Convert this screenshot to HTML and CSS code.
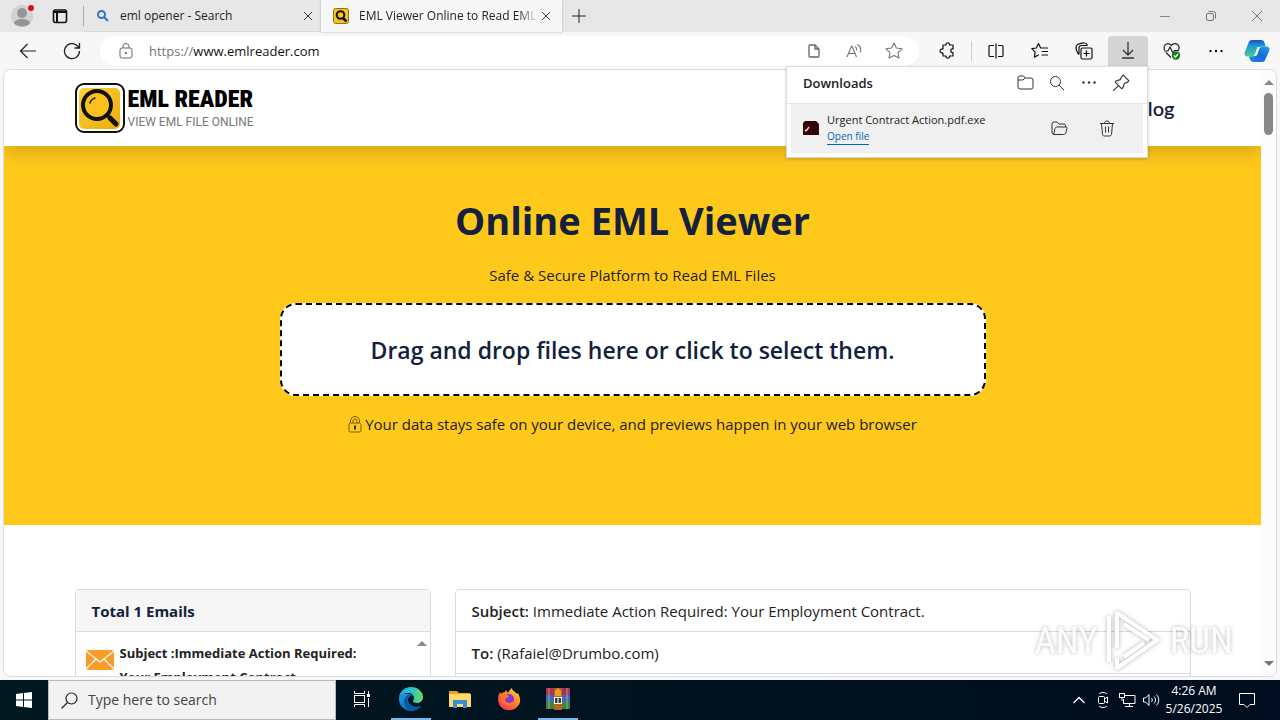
FILE: index.html
```html
<!DOCTYPE html>
<html lang="en">
<head>
<meta charset="utf-8">
<title>EML Viewer Online to Read EML Files</title>
<link rel="stylesheet" href="styles.css">
</head>
<body>
<div class="desktop">
  <div class="tabstrip">
    <button class="plain profile" aria-label="Profile"><svg width="26" height="26" viewBox="0 0 26 26"><circle cx="12" cy="13" r="11" fill="#d4d2d0"/><circle cx="12" cy="10" r="5" fill="#979593"/><path d="M4 20.500c0-6 16-6 16 0-4 4-12 4-16 0z" fill="#979593"/><circle cx="21" cy="5" r="3" fill="#e00b1c"/></svg></button>
    <button class="plain workspaces" aria-label="Tab actions"><svg width="16" height="16" viewBox="0 0 16 16" fill="none" stroke="#111" stroke-width="1.6"><rect x="1.5" y="2" width="13" height="12.500" rx="2"/><path d="M1.500 4h13M5 4v10" stroke-width="2"/></svg></button>
    <span class="strip-line"></span>
    <div class="tab">
      <svg width="14" height="14" viewBox="0 0 14 14" fill="none" stroke="#2f78bd" stroke-width="2"><circle cx="5.500" cy="5.500" r="3.500"/><path d="M8 8l4 4"/></svg>
      <span class="tab-title">eml opener - Search</span>
      <button class="plain close" aria-label="Close tab"><svg width="10" height="10" viewBox="0 0 10 10" stroke="#333"><path d="M1 1l8 8M9 1l-8 8"/></svg></button>
    </div>
    <div class="tab active">
      <svg width="16" height="16" viewBox="0 0 16 16"><rect x=".5" y=".5" width="15" height="15" rx="2" fill="#fbc21b" stroke="#8d712d"/><circle cx="7.500" cy="7" r="3.800" fill="none" stroke="#111" stroke-width="2"/><path d="M10 10l3.500 3.500" stroke="#111" stroke-width="2.500"/></svg>
      <span class="tab-title fade">EML Viewer Online to Read EML Files</span>
      <button class="plain close" aria-label="Close tab"><svg width="10" height="10" viewBox="0 0 10 10" stroke="#333"><path d="M1 1l8 8M9 1l-8 8"/></svg></button>
    </div>
    <button class="plain newtab" aria-label="New tab"><svg width="14" height="14" viewBox="0 0 14 14" stroke="#222"><path d="M7 0v14M0 7h14"/></svg></button>
    <div class="window-buttons">
      <button class="plain" aria-label="Minimize"><svg width="12" height="12" viewBox="0 0 12 12" stroke="#888"><path d="M1 6.500h10"/></svg></button>
      <button class="plain" aria-label="Restore"><svg width="12" height="12" viewBox="0 0 12 12" fill="none" stroke="#777"><rect x="1.500" y="3.500" width="7" height="7" rx="1.500"/><path d="M3.500 1.500h5a2 2 0 0 1 2 2v5"/></svg></button>
      <button class="plain" aria-label="Close"><svg width="12" height="12" viewBox="0 0 12 12" stroke="#777"><path d="M1 1l10 10M11 1L1 11"/></svg></button>
    </div>
  </div>

  <div class="toolbar">
    <button class="plain tool" aria-label="Back"><svg width="18" height="16" viewBox="0 0 18 16" fill="none" stroke="#222" stroke-width="1.200"><path d="M17 8H2M8.500 1L1.500 8l7 7"/></svg></button>
    <button class="plain tool" aria-label="Refresh"><svg width="18" height="18" viewBox="0 0 18 18" fill="none" stroke="#222" stroke-width="1.300"><path d="M16.500 9A7.500 7.500 0 1 1 14 3.500l2 2M16.500 1v5h-5"/></svg></button>
    <div class="address">
      <svg class="site-lock" width="14" height="16" viewBox="0 0 14 16" fill="none" stroke="#666"><rect x="1" y="5" width="12" height="10" rx="2"/><path d="M4 5V3.500a3 3 0 0 1 6 0V5"/><circle cx="7" cy="10" r=".7" fill="#666"/></svg>
      <div class="url" role="textbox" aria-label="Address"><span class="scheme">https://</span>www.emlreader.com</div>
      <button class="plain tool" aria-label="Page"><svg width="12" height="14" viewBox="0 0 12 14" fill="none" stroke="#666" stroke-width="1.300"><path d="M1 2a1 1 0 0 1 1-1h5l4 4v7a1 1 0 0 1-1 1H2a1 1 0 0 1-1-1zM7 1v4h4"/></svg></button>
      <button class="plain tool" aria-label="Read aloud"><svg width="16" height="16" viewBox="0 0 16 16" fill="none" stroke="#777" stroke-width="1.100"><path d="M1 14L5.500 3h.5l4.500 11M2.500 10.500H9M9 3.500c1.500 1 2 2.500 1.500 4M11.500 1.500c3 2 4 4.500 2.500 8"/></svg></button>
      <button class="plain tool" aria-label="Favorite"><svg width="18" height="17" viewBox="0 0 18 17" fill="none" stroke="#777" stroke-width="1.100" stroke-linejoin="round"><path d="M9 1l2.400 5 5.600.8-4 3.900 1 5.300-5-2.600L4 16l1-5.300-4-3.900L6.600 6z"/></svg></button>
    </div>
    <button class="plain tool" aria-label="Extensions"><svg width="16" height="17" viewBox="0 0 16 17" fill="none" stroke="#111" stroke-width="1.200" stroke-linejoin="round"><path d="M4 3h3c-.5-3 4-3 3.500 0H14v4c-3-.8-3 4 0 3.500V14h-3.500c.5 3-4 3-3.500 0H4v-3C0 11.500 0 6.500 4 7z"/></svg></button>
    <span class="tool-line"></span>
    <button class="plain tool" aria-label="Split screen"><svg width="16" height="16" viewBox="0 0 16 16" fill="none" stroke="#111" stroke-width="1.200"><path d="M6 2.500H2a1 1 0 0 0-1 1v9a1 1 0 0 0 1 1h4M10 2.500h4a1 1 0 0 1 1 1v9a1 1 0 0 1-1 1h-4M8 .5v15"/></svg></button>
    <button class="plain tool" aria-label="Favorites"><svg width="18" height="17" viewBox="0 0 18 17" fill="none" stroke="#111" stroke-width="1.200" stroke-linejoin="round"><path d="M11 6L9.600 6 7.500 1.500 5.400 6 .8 6.700l3.400 3.500-.8 5 4.400-2.500M11 6h6M10.500 9.500H17M10.500 13H17"/></svg></button>
    <button class="plain tool" aria-label="Collections"><svg width="18" height="18" viewBox="0 0 18 18" fill="none" stroke="#111" stroke-width="1.200"><rect x="6" y="6" width="11" height="11" rx="1.500"/><path d="M11.500 8.500v6M8.500 11.500h6M4 12.500C1.500 10.500.5 6 1.500 3.500 2.500 2 7 .8 9.500 1c2 0 2.500 1 3 2.500M4 12.500V6c0-1.500 1-2.500 2.500-2.500h6"/></svg></button>
    <div class="downloads">
      <button class="plain tool pressed" aria-label="Downloads"><svg width="14" height="17" viewBox="0 0 14 17" fill="none" stroke="#333" stroke-width="1.300"><path d="M7 0v13M2 8l5 5 5-5M1 16h12"/></svg></button>
      <section class="popup">
        <header class="popup-head">
          <h2>Downloads</h2>
          <button class="plain pop-btn" aria-label="Open downloads folder"><svg width="17" height="15" viewBox="0 0 17 15" fill="none" stroke="#333"><path d="M1 3a2 2 0 0 1 2-2h3.500l2 2H14a2 2 0 0 1 2 2v7a2 2 0 0 1-2 2H3a2 2 0 0 1-2-2zM1 5h5l2-2"/></svg></button>
          <button class="plain pop-btn" aria-label="Search downloads"><svg width="16" height="16" viewBox="0 0 16 16" fill="none" stroke="#333"><circle cx="6.500" cy="6.500" r="5"/><path d="M10 10l5 5"/></svg></button>
          <button class="plain pop-btn" aria-label="More options"><svg width="14" height="4" viewBox="0 0 14 4" fill="#333"><circle cx="1.500" cy="1.500" r="1.200"/><circle cx="7" cy="1.500" r="1.200"/><circle cx="12.500" cy="1.500" r="1.200"/></svg></button>
          <button class="plain pop-btn" aria-label="Pin"><svg width="18" height="18" viewBox="0 0 16 16" fill="none" stroke="#333" stroke-linejoin="round"><path d="M10 1l5 5-.8 1-3.200 1.500-1.500 4-1 .5L2.800 7.300l.6-1L7.300 5 9 1.800zM5.500 10.500L1 15"/></svg></button>
        </header>
        <div class="download-item">
          <svg width="16" height="14" viewBox="0 0 16 14"><path d="M2 0h11l3 3v11H0V2z" fill="#310509"/><path d="M2 10c3-1 3-3 4-4" fill="none" stroke="#f7cfd1" stroke-width="1.500"/></svg>
          <div class="file">
            <span class="file-name">Urgent Contract Action.pdf.exe</span>
            <a href="#" class="open-file">Open file</a>
          </div>
          <button class="plain item-btn" aria-label="Show in folder"><svg width="17" height="15" viewBox="0 0 17 15" fill="none" stroke="#333" stroke-linejoin="round"><path d="M2.500 13.500L1 12V3a2 2 0 0 1 2-2h3l2 2h5a1.500 1.500 0 0 1 1.500 1.500V6M2.500 13.500L4 7.500c.3-1 1-1.500 2-1.500h9c1 0 1.200.5 1 1.500l-1.300 4.500c-.3 1-1 1.500-2 1.500z"/></svg></button>
          <button class="plain item-btn" aria-label="Delete file"><svg width="16" height="17" viewBox="0 0 16 17" fill="none" stroke="#333"><path d="M1 3.500h14M5.500 3.500c0-3.500 5-3.500 5 0M2.500 3.500l1 11a2 2 0 0 0 2 1.500h5a2 2 0 0 0 2-1.500l1-11M6.500 6.500v6M9.500 6.500v6"/></svg></button>
        </div>
      </section>
    </div>
    <button class="plain tool" aria-label="Browser essentials"><svg width="18" height="18" viewBox="0 0 18 18" fill="none" stroke="#222" stroke-width="1.200"><path d="M1.500 8C0 4 3 1 6 1.800 7.500 2 8 3 8.500 3.500 10 1 14 1 15.500 3.500c.8 1.500.8 3 0 4.500M3 10.500l5 5M1 9h4l2-4 3 6 1.500-2.500H16"/><circle cx="13" cy="13.500" r="4.200" fill="#16811c" stroke="none"/><path d="M11 13.500l1.500 1.500 2.500-3" stroke="#fff"/></svg></button>
    <button class="plain tool" aria-label="Settings and more"><svg width="14" height="4" viewBox="0 0 14 4" fill="#111"><circle cx="1.500" cy="2" r="1.200"/><circle cx="7" cy="2" r="1.200"/><circle cx="12.500" cy="2" r="1.200"/></svg></button>
    <button class="plain copilot" aria-label="Copilot"><svg width="26" height="24" viewBox="0 0 26 24"><defs><linearGradient id="cpa" x2="0" y2="1"><stop stop-color="#1c4fc0"/><stop offset=".35" stop-color="#1c9ad6"/><stop offset="1" stop-color="#4ccb86"/></linearGradient><linearGradient id="cpb" x1="0" y1="1" x2="1" y2="0"><stop stop-color="#1a8de8"/><stop offset=".5" stop-color="#1668d8"/><stop offset="1" stop-color="#26a4ee"/></linearGradient></defs><path d="M8 1h9c2 0 3 1 3.600 3l1 3.500h-3.600c-2 0-3.200.8-3.800 2.800L12 15c-.6 2-1.700 2.500-3.700 2.500H4c-3 0-4-2-3.200-4.500L4.500 4C5.200 2 6 1 8 1z" fill="url(#cpa)"/><path d="M18 23H9.500c-2 0-3-1-3.600-3L5 17.500h3c2 0 3.300-.8 4-2.800l1.600-4.700c.6-1.700 1.700-2.500 3.700-2.500H22c3 0 4 2 3.200 4.500L21.500 20c-.7 2-1.500 3-3.500 3z" fill="url(#cpb)"/><path d="M13.500 8h4c-1.300.3-1.800 1-2.200 2l-1.800 5c-.4 1.300-1 2-2.200 2H9c1-.4 1.500-1 1.900-2z" fill="#f4fcff"/></svg></button>
  </div>

  <div class="viewport">
    <main class="page">
      <header class="site-head">
        <div class="container head-row">
          <a class="brand" href="#" aria-label="EML Reader">
            <svg width="50" height="50" viewBox="0 0 50 50"><defs><linearGradient id="lg" x2="1" y2="1"><stop stop-color="#ffd23a"/><stop offset="1" stop-color="#eda90b"/></linearGradient></defs><rect x="1" y="1" width="48" height="48" rx="8" fill="#fff" stroke="#111" stroke-width="2"/><rect x="4" y="5" width="41" height="41" rx="5" fill="url(#lg)"/><circle cx="22" cy="22" r="14" fill="#fbc01b" stroke="#111" stroke-width="4"/><path d="M31 31l3 3" stroke="#111" stroke-width="3"/><path d="M35 35l6 6" stroke="#111" stroke-width="5" stroke-linecap="round"/><path d="M15 20c.5-2 2-4 5-5" stroke="#222" stroke-width="1.500" fill="none" stroke-linecap="round"/></svg>
            <span class="brand-text"><strong>EML READER</strong><small>VIEW EML FILE ONLINE</small></span>
          </a>
          <nav><a class="nav-link" href="#">Blog</a></nav>
        </div>
      </header>
      <section class="hero">
        <h1>Online EML Viewer</h1>
        <p class="lead">Safe &amp; Secure Platform to Read EML Files</p>
        <button class="dropzone">Drag and drop files here or click to select them.</button>
        <p class="safe"><svg width="14" height="17" viewBox="0 0 14 17" fill="none" stroke="#7a5c12"><rect x="1" y="7" width="12" height="9" rx="1.500"/><path d="M2.500 7V5a4.500 4.500 0 0 1 9 0v2M5 7V5a2 2 0 0 1 4 0v2"/><path d="M7 9.500v4" stroke-width="2" stroke="#3c2c05"/></svg>Your data stays safe on your device, and previews happen in your web browser</p>
      </section>
      <section class="container mail">
        <div class="card list">
          <h2 class="list-head">Total 1 Emails</h2>
          <div class="list-body">
            <a class="mail-item" href="#">
              <svg width="30" height="22" viewBox="0 0 30 22"><rect x="1" y="1" width="28" height="20" rx="2" fill="#fa9b28"/><path d="M1 2l14 11L29 2M1 20l10-10M29 20L19 10" fill="none" stroke="#fff4df" stroke-width="1.500"/></svg>
              <span>Subject :Immediate Action Required: Your Employment Contract.</span>
            </a>
            <span class="arrow up"></span>
          </div>
        </div>
        <div class="card detail">
          <p class="field"><b>Subject:</b> Immediate Action Required: Your Employment Contract.</p>
          <p class="field"><b>To:</b> (Rafaiel@Drumbo.com)</p>
          <p class="field"></p>
        </div>
      </section>
    </main>
    <div class="scrollbar"><span class="arrow up"></span><span class="thumb"></span><span class="arrow down"></span></div>
    <div class="watermark">
      <span>ANY</span>
      <svg width="60" height="66" viewBox="0 0 60 66" fill="none" stroke="#fff" stroke-width="4" stroke-linejoin="round"><path d="M5 8v46M13 40V5l40 27-40 28V50M20 16l25 16M20 49l20-14"/></svg>
      <span>RUN</span>
    </div>
  </div>

  <footer class="taskbar">
    <button class="plain start" aria-label="Start"><svg width="16" height="16" viewBox="0 0 16 16" fill="#fff"><path d="M0 2l7-1v6.500H0zM8 1l8-1v7.500H8zM0 8.500h7V15l-7-1zM8 8.500h8V16l-8-1z"/></svg></button>
    <label class="search"><svg width="17" height="17" viewBox="0 0 17 17" fill="none" stroke="#222" stroke-width="1.200"><circle cx="10.500" cy="6.500" r="5.500"/><path d="M6.500 10.500L.5 16.500"/></svg><input type="text" placeholder="Type here to search" aria-label="Search"></label>
    <div class="apps">
      <button class="plain app" aria-label="Task View"><svg width="18" height="16" viewBox="0 0 18 16" fill="none" stroke="#fff"><path d="M1.500 0v2.500h10V0M1.500 16v-2.500h10V16M15.500 0v3M15.500 7v9"/><rect x="1.500" y="4.500" width="10" height="7"/><rect x="14.500" y="3.500" width="2" height="2" fill="#fff"/></svg></button>
      <button class="plain app running" aria-label="Microsoft Edge"><svg width="26" height="26" viewBox="0 0 26 26"><defs><linearGradient id="ea" x2="1"><stop stop-color="#1aa9ec"/><stop offset=".55" stop-color="#2dc5c0"/><stop offset="1" stop-color="#6fdd56"/></linearGradient><linearGradient id="eb" x2="1" y2="1"><stop stop-color="#1b9fe8"/><stop offset="1" stop-color="#0b4fa8"/></linearGradient></defs><path d="M1 11C2 5 7 1 13 1c7 0 12 5 12 10 0 4-3 6-6 6-3 0-4-1-4-2 0-.6 1-1 1-3 0-3-3-5-6-5-4 0-7 2-9 4z" fill="url(#ea)"/><path d="M1 11c2-3 5-4 9-3 2 0 4 1 5 2-3-1-5 1-5 4 0 4 4 7 8 7 2 0 4-.6 5.500-2C21 23 17 25 13 25 6 25 0 19 1 11z" fill="url(#eb)"/><path d="M10 9c-5 2-6 11 2 16 5 0 9-2 11-5-8 2-13-2-13-6 0-3 2-4 4-4-1-1-2-1-4-1z" fill="#0c59a4"/></svg></button>
      <button class="plain app" aria-label="File Explorer"><svg width="24" height="20" viewBox="0 0 24 20"><path d="M1 2h8l2 2h11v4H1z" fill="#e8a317"/><path d="M1 5h22v13H1z" fill="#ffd96c"/><path d="M5 11h14v8h-4v-4H9v4H5z" fill="#3a8fd0"/></svg></button>
      <button class="plain app" aria-label="Firefox"><svg width="24" height="24" viewBox="0 0 24 24"><defs><linearGradient id="ff" x1="1" x2=".2" y2="1"><stop stop-color="#ffe14a"/><stop offset=".45" stop-color="#ff8b27"/><stop offset="1" stop-color="#ff2b5b"/></linearGradient></defs><path d="M3 5l1 2c1-1 2-2 4-2l1-2 2 3c1-2 2-4 4-5 0 3 3 3 5 6l1-1c3 6 3 11-1 14-5 5-13 4-17-1C0 14 1 8 3 5z" fill="url(#ff)"/><circle cx="12" cy="12" r="5" fill="#8138d8"/><path d="M4 8c4-2 6 0 8 1-1 2-4 2-4 4 1 3 5 4 9 1-2 7-11 6-13 0z" fill="#ff7128"/></svg></button>
      <button class="plain app running" aria-label="WinRAR"><svg width="24" height="22" viewBox="0 0 24 22"><rect y="0" width="24" height="7" fill="#a83253"/><rect y="7" width="24" height="7" fill="#3a6ab8"/><rect y="14" width="24" height="7" fill="#3e8440"/><path d="M3 0v21M21 0v21" stroke="#d9b2a2" stroke-opacity=".7"/><rect x="8" width="8" height="22" fill="#b36524"/><path d="M9 3l3-3 3 3v5H9z" fill="#ef982b"/><rect x="8.500" y="9.500" width="7" height="6" fill="#443a35" stroke="#fff"/><path d="M12 10v5" stroke="#fff"/></svg></button>
    </div>
    <div class="tray">
      <button class="plain tray-btn" aria-label="Show hidden icons"><svg width="12" height="8" viewBox="0 0 12 8" fill="none" stroke="#fff" stroke-width="1.300"><path d="M.5 7L6 1.500 11.500 7"/></svg></button>
      <button class="plain tray-btn" aria-label="Meet Now"><svg width="12" height="16" viewBox="0 0 12 16" fill="none" stroke="#fff"><rect x="1.500" y="4.500" width="6" height="7" rx="1"/><path d="M7.500 7l3-2v6l-3-2M2 2c2-2 6-2 8 0M2 14c2 2 6 2 8 0"/></svg></button>
      <button class="plain tray-btn" aria-label="Network"><svg width="17" height="15" viewBox="0 0 17 15" fill="none" stroke="#fff"><path d="M6 2.500h10v8H4.500V6M10.500 10.500v3M6 13.500h8"/><rect x=".5" y=".5" width="5" height="4"/><path d="M3 4.500V8"/></svg></button>
      <button class="plain tray-btn" aria-label="Volume"><svg width="17" height="14" viewBox="0 0 17 14" fill="none" stroke="#fff"><path d="M.5 5v4h2L6 12.500v-11L2.500 5zM8.500 5c1 1 1 3 0 4M11 3.500c2 2 2 5 0 7M13.500 1.500c3 3 3 8 0 11"/></svg></button>
      <div class="clock"><span>4:26 AM</span><span>5/26/2025</span></div>
      <button class="plain notify" aria-label="Notifications"><svg width="16" height="16" viewBox="0 0 16 16" fill="none" stroke="#fff"><path d="M.5 1.500h15v11H11L8 15.500l-3-3H.5z"/></svg></button>
    </div>
  </footer>
</div>
</body>
</html>
```

FILE: styles.css
```css
* { box-sizing: border-box; }
body {
  margin: 0;
  font-family: "Open Sans", "Noto Sans", sans-serif;
  font-size: 15px;
  color: #222;
}
h1, h2, p { margin: 0; }
svg { display: block; flex: none; }
a { color: inherit; text-decoration: none; }
.plain {
  display: flex;
  align-items: center;
  justify-content: center;
  flex: none;
  padding: 0;
  border: 0;
  background: none;
  font: inherit;
}
.desktop {
  display: flex;
  flex-direction: column;
  height: 100vh;
  overflow: hidden;
  background: #f7f7f7;
}

/* Tab strip */
.tabstrip {
  display: flex;
  align-items: center;
  flex: none;
  height: 32px;
  background: #e7e7e7;
  font-size: 12px;
}
.profile { width: 40px; padding-left: 6px; }
.workspaces { width: 40px; }
.strip-line { width: 1px; height: 20px; margin-left: 3px; background: #aaa; }
.tab {
  display: flex;
  align-items: center;
  gap: 10px;
  width: 237px;
  height: 32px;
  padding: 0 8px 0 12px;
  border-bottom: 1px solid #d8d8d8;
}
.tab.active {
  width: 241px;
  padding-right: 11px;
  border-color: #f7f7f7;
  background: #f7f7f7;
  box-shadow: 0 0 2px #aaa;
}
.tab-title { flex: 1; overflow: hidden; white-space: nowrap; }
.tab-title.fade {
  -webkit-mask-image: linear-gradient(90deg, #000 88%, transparent);
  mask-image: linear-gradient(90deg, #000 88%, transparent);
}
.tab.active .tab-title { margin-right: -8px; }
.tab .close { width: 10px; height: 16px; }
.newtab { width: 34px; height: 32px; }
.window-buttons { display: flex; margin-left: auto; }
.window-buttons button { width: 46px; height: 32px; }

/* Toolbar */
.toolbar {
  display: flex;
  align-items: center;
  gap: 4px;
  flex: none;
  height: 37px;
  padding: 0 6px 0 8px;
}
.tool { width: 40px; height: 30px; }
.pressed { border-radius: 4px 4px 0 0; background: #d5d5d5; }
.tool-line { width: 1px; height: 20px; background: #ccc; }
.copilot { width: 34px; height: 30px; }
.address {
  display: flex;
  align-items: center;
  flex: 1;
  height: 30px;
  margin: 0 4px;
  padding: 0 5px 0 19px;
  border-radius: 15px;
  background: #fff;
}
.url { flex: 1; margin-left: 16px; font-size: 13px; color: #111; }
.scheme { color: #777; }

/* Downloads flyout */
.downloads { position: relative; }
.popup {
  position: absolute;
  top: 30px;
  right: 0;
  z-index: 3;
  width: 362px;
  padding-bottom: 4px;
  border: 1px solid #ddd;
  background: #fff;
  box-shadow: 0 1px 3px rgba(0, 0, 0, .2);
}
.popup-head {
  display: flex;
  align-items: center;
  height: 37px;
  padding: 0 10px 4px 16px;
  border-bottom: 1px solid #e6e6e6;
}
.popup-head h2 { flex: 1; font-size: 13px; font-weight: 600; }
.pop-btn { width: 32px; height: 30px; }
.download-item {
  display: flex;
  align-items: center;
  height: 49px;
  margin: 0 4px;
  padding: 0 12px;
  background: #f0f0f0;
}
.file { display: flex; flex: 1; flex-direction: column; align-items: flex-start; margin-left: 8px; }
.file-name { font-size: 11px; line-height: 18px; }
.open-file { border-bottom: 1px solid #0067b8; font-size: 10px; line-height: 15px; color: #0067b8; }
.item-btn { width: 48px; height: 40px; }

/* Page */
.viewport {
  position: relative;
  display: flex;
  flex: 1;
  min-height: 0;
  margin: 0 3px 3px;
  overflow: hidden;
  border: 1px solid #ddd;
  border-radius: 8px;
  background: #fff;
}
.page { flex: 1; overflow: hidden; }
.container { max-width: 1116px; margin: 0 auto; }
.site-head {
  position: relative;
  z-index: 1;
  background: #fff;
  box-shadow: 0 8px 16px rgba(0, 0, 0, .15);
}
.head-row { display: flex; align-items: center; justify-content: space-between; height: 76px; }
.brand { display: flex; align-items: center; gap: 3px; }
.brand-text { display: flex; flex-direction: column; }
.brand-text strong {
  font: 900 24px/28px "Roboto Condensed", "Liberation Sans Narrow", Roboto, sans-serif;
  color: #000;
}
.brand-text small { font: 400 12px/18px Roboto, sans-serif; color: #777; }
.nav-link { padding: 0 16px; font: 600 20px/28px Lato, sans-serif; color: #14213d; }
.hero {
  display: flex;
  flex-direction: column;
  align-items: center;
  min-height: 379px;
  padding: 50px 16px 0;
  background: #ffc91c;
}
.hero h1 { font-size: 38px; line-height: 48px; font-weight: 700; color: #14213d; }
.lead { margin-top: 19px; line-height: 24px; }
.dropzone {
  width: 706px;
  max-width: 100%;
  height: 93px;
  margin-top: 16px;
  border: 2px dashed #000;
  border-radius: 16px;
  background: #fff;
  font: 600 23px/32px "Open Sans", sans-serif;
  color: #14213d;
}
.safe { display: flex; align-items: center; gap: 3px; margin-top: 16px; line-height: 24px; }
.mail { display: grid; grid-template-columns: repeat(12, 1fr); gap: 24px; padding-top: 64px; }
.card { border: 1px solid #dcdcdc; border-radius: 4px; }
.list { grid-column: span 4; }
.detail { grid-column: span 8; }
.list-head {
  padding: 9px 16px 8px;
  border-bottom: 1px solid #dcdcdc;
  background: #f6f6f6;
  font-size: 15px;
  line-height: 24px;
  font-weight: 700;
  color: #14213d;
}
.list-body { display: flex; justify-content: space-between; padding: 9px 3px 0 9px; }
.mail-item { display: flex; gap: 5px; max-width: 290px; font-size: 13px; line-height: 24px; font-weight: 700; }
.mail-item svg { margin-top: 8px; }
.field { min-height: 42px; padding: 9px 16px 8px; border-bottom: 1px solid #dcdcdc; line-height: 24px; }
.field b { font-weight: 600; }
.arrow { border: 5px solid transparent; }
.arrow.up { border-top: 0; border-bottom-color: #888; }
.arrow.down { border-bottom: 0; border-top-color: #777; }
.list-body .arrow { height: 5px; }
.scrollbar {
  display: flex;
  flex-direction: column;
  align-items: center;
  width: 15px;
  padding: 10px 0;
  background: #fcfcfc;
}
.thumb { width: 9px; height: 42px; margin-top: 8px; border-radius: 5px; background: #888; }
.scrollbar .down { margin-top: auto; }
.watermark {
  position: absolute;
  right: 43px;
  bottom: 2px;
  display: flex;
  align-items: center;
  gap: 6px;
  font: 400 37px/44px "Roboto Condensed", "Liberation Sans Narrow", Roboto, sans-serif;
  color: rgba(255, 255, 255, .9);
  filter: drop-shadow(0 0 2px rgba(0, 0, 0, .3));
}

/* Taskbar */
.taskbar {
  display: flex;
  flex: none;
  height: 40px;
  background: linear-gradient(90deg, #001820, #000d1e);
  color: #fff;
}
.start { width: 48px; }
.search {
  display: flex;
  align-items: center;
  gap: 10px;
  width: 288px;
  padding: 0 12px;
  border: 1px solid #bbb;
  background: #f2f2f2;
}
.search input {
  flex: 1;
  min-width: 0;
  padding: 0;
  border: 0;
  outline: 0;
  background: none;
  font: 400 14px/20px "Open Sans", sans-serif;
}
.search input::placeholder { color: #444; opacity: 1; }
.apps { display: flex; gap: 9px; padding-left: 6px; }
.app { width: 40px; border-bottom: 2px solid transparent; }
.running { border-bottom-color: #76b9ed; }
.tray { display: flex; align-items: center; margin-left: auto; padding-right: 17px; }
.tray-btn { width: 24px; height: 40px; }
.clock { display: flex; flex-direction: column; align-items: center; width: 62px; font-size: 12px; line-height: 18px; }
.notify { width: 32px; height: 40px; margin-left: 6px; }
```
